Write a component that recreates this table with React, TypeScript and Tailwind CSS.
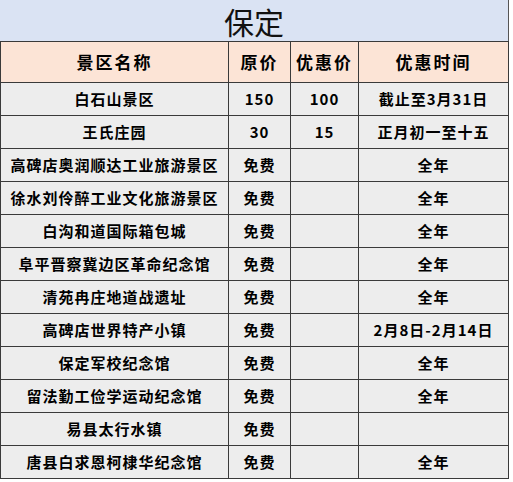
const rows: [string, string, string, string][] = [
  ['白石山景区', '150', '100', '截止至3月31日'],
  ['王氏庄园', '30', '15', '正月初一至十五'],
  ['高碑店奥润顺达工业旅游景区', '免费', '', '全年'],
  ['徐水刘伶醉工业文化旅游景区', '免费', '', '全年'],
  ['白沟和道国际箱包城', '免费', '', '全年'],
  ['阜平晋察冀边区革命纪念馆', '免费', '', '全年'],
  ['清苑冉庄地道战遗址', '免费', '', '全年'],
  ['高碑店世界特产小镇', '免费', '', '2月8日-2月14日'],
  ['保定军校纪念馆', '免费', '', '全年'],
  ['留法勤工俭学运动纪念馆', '免费', '', '全年'],
  ['易县太行水镇', '免费', '', ''],
  ['唐县白求恩柯棣华纪念馆', '免费', '', '全年'],
];

const headers = ['景区名称', '原价', '优惠价', '优惠时间'];

export default function App() {
  return (
    <div className="h-[482px] w-[513px] bg-white font-['Noto_Sans_CJK_SC',sans-serif] text-black">
      <div className="w-[509px]">
        <div className="flex h-[41px] items-center justify-center border-r border-[#555] bg-[#dae3f3] text-[30px] leading-none text-[#111]">
          保定
        </div>
        <div className="grid grid-cols-[227px_61px_67px_149px] gap-px border border-t-[#3a3a3a] border-[#3a3a3a] bg-[#3a3a3a]">
          {headers.map((h) => (
            <div
              key={h}
              className="flex h-[40px] items-center justify-center bg-[#fce4d6] text-[17px] font-bold tracking-[2px]"
            >
              {h}
            </div>
          ))}
          {rows.map((r) =>
            r.map((cell, i) => (
              <div
                key={r[0] + i}
                className="flex h-[32px] items-center justify-center bg-[#ededed] text-[15px] font-bold tracking-[1px]"
              >
                {cell}
              </div>
            )),
          )}
        </div>
      </div>
    </div>
  );
}
